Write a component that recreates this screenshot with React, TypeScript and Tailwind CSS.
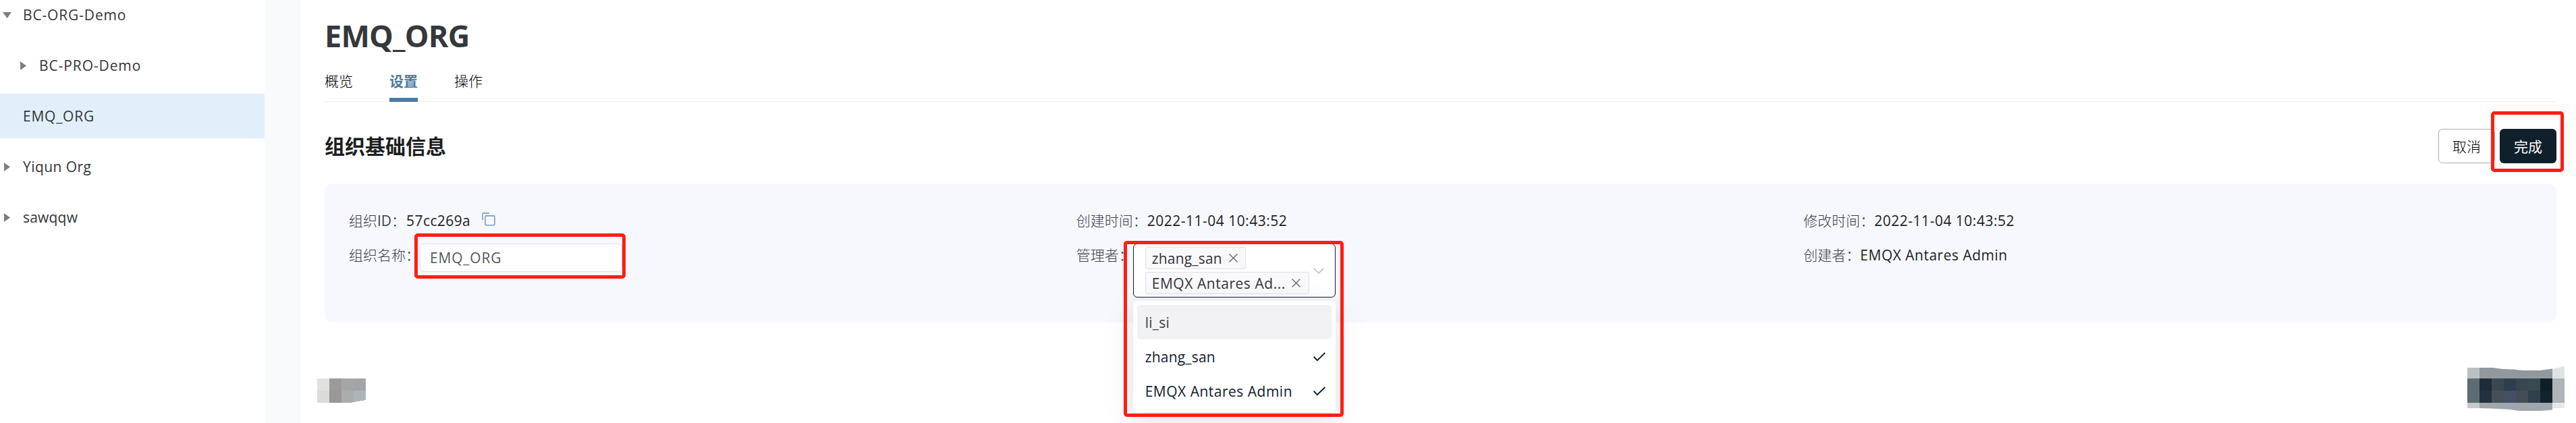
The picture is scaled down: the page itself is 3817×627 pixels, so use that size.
import React from 'react';

function CaretDown() {
  return (
    <svg width="13" height="9" viewBox="0 0 13 9" className="block shrink-0">
      <path d="M0 0H13L6.5 9Z" fill="#7b8085" />
    </svg>
  );
}

function CaretRight() {
  return (
    <svg width="9" height="13" viewBox="0 0 9 13" className="block shrink-0">
      <path d="M0 0V13L9 6.5Z" fill="#7b8085" />
    </svg>
  );
}

function CopyIcon() {
  return (
    <svg width="20" height="20" viewBox="0 0 20 20" fill="none" stroke="#7a9fc0" strokeWidth="1.6" className="block">
      <path d="M1 11V2Q1 0.9 2.1 0.9H11" />
      <rect x="5" y="4.9" width="13.9" height="13.9" rx="1.2" />
    </svg>
  );
}

function CloseIcon() {
  return (
    <svg width="13" height="13" viewBox="0 0 13 13" fill="none" stroke="#606266" strokeWidth="1.3" className="block shrink-0">
      <path d="M0.5 0.5L12.5 12.5M12.5 0.5L0.5 12.5" />
    </svg>
  );
}

function CheckIcon() {
  return (
    <svg width="18" height="14" viewBox="0 0 18 14" fill="none" stroke="#0f212d" strokeWidth="2" className="block shrink-0">
      <path d="M0.6 6.8L5.8 12.2L17.4 0.9" />
    </svg>
  );
}

function Highlight({ className }: { className: string }) {
  return (
    <div className={'pointer-events-none absolute z-20 rounded-[5px] border-[5px] border-[#ff1e12] ' + className} />
  );
}

function TreeItem({
  label,
  caret,
  tracking,
  nested,
  active,
}: {
  label: string;
  caret?: React.ReactNode;
  tracking: string;
  nested?: boolean;
  active?: boolean;
}) {
  return (
    <div className={'flex h-[66px] items-center rounded-r-[3px] ' + (nested ? 'pl-6 ' : '') + (active ? 'bg-[#e1effa]' : '')}>
      <div className="flex w-[21px] justify-center">{caret}</div>
      <div className={'ml-[13px] ' + tracking}>{label}</div>
    </div>
  );
}

function Label({ children }: { children: React.ReactNode }) {
  return <span className="shrink-0 font-light text-[#3d3f47]">{children}</span>;
}

function Tag({ label, className, tracking }: { label: string; className: string; tracking: string }) {
  return (
    <div className={'flex h-[33px] items-center justify-between rounded-[3px] border border-[#dfe1e6] bg-[#f9f9fb] pl-[9px] text-[#333538] ' + className}>
      <span className={'leading-[30px] ' + tracking}>{label}</span>
      <CloseIcon />
    </div>
  );
}

function Option({ label, selected, tracking }: { label: string; selected?: boolean; tracking: string }) {
  return (
    <div
      className={
        'flex h-[51px] items-center justify-between rounded-[5px] pr-[9px] pl-3 ' +
        (selected ? 'text-[#0f212d]' : 'bg-[#f2f2f4] text-[#3d3f45]')
      }
    >
      <span className={tracking}>{label}</span>
      {selected && <CheckIcon />}
    </div>
  );
}

function AdminSelect() {
  return (
    <div className="relative">
      <div className="flex h-20 w-[300px] items-center rounded-[6px] border border-[#0f212d] bg-white pl-[17px]">
        <div className="flex w-[243px] flex-col gap-1">
          <Tag label="zhang_san" className="w-[149px] pr-[11px]" tracking="tracking-[0.2px]" />
          <Tag label="EMQX Antares Ad..." className="w-[243px] pr-3" tracking="tracking-[0.55px]" />
        </div>
        <svg width="16" height="9" viewBox="0 0 16 9" fill="none" stroke="#bfc2c8" strokeWidth="1.6" className="ml-1.5 block">
          <path d="M0.7 0.8L8 7.8L15.3 0.8" />
        </svg>
      </div>
      <div className="absolute top-[85px] left-0 z-10 w-[300px] rounded-[5px] bg-white p-1.5 shadow-[0_14px_48px_8px_rgba(0,0,0,0.05),0_6px_24px_rgba(0,0,0,0.08)]">
        <Option label="li_si" tracking="tracking-[0.25px]" />
        <Option label="zhang_san" selected tracking="tracking-[0.2px]" />
        <Option label="EMQX Antares Admin" selected tracking="tracking-[0.5px]" />
      </div>
      <Highlight className="-top-1 -left-[14px] h-[261px] w-[326px]" />
    </div>
  );
}

function SmallMosaic() {
  return (
    <svg width="72" height="36" viewBox="0 0 72 36" shapeRendering="crispEdges" className="-ml-[11px] mt-4 block">
      <path d="M0 0H18V18H0Z" fill="#e1e1e0" />
      <path d="M18 0H36V18H18Z" fill="#9b9a98" />
      <path d="M36 0H54V18H36Z" fill="#a5a6a8" />
      <path d="M54 0H72V18H54Z" fill="#a3a4a7" />
      <path d="M0 18H18V36H0Z" fill="#dbdbda" />
      <path d="M18 18H36V36H18Z" fill="#999896" />
      <path d="M36 18H54V35L50 36H36Z" fill="#abadac" />
      <path d="M54 18H72V32L54 35Z" fill="#afb4b8" />
    </svg>
  );
}

const mosaic = [
  ['#1e2c38', '#384a4f', '#303d4c', '#38464f', '#38494f', '#0c1f2a'],
  ['#22313e', '#464f57', '#444f62', '#444c55', '#2f3f4e', '#12232c'],
];

function LargeMosaic() {
  return (
    <svg width="144" height="66" viewBox="0 0 144 66" className="-mt-[2px] -mr-3 block">
      <path d="M0 2H18V18H0Z" fill="#bac0c3" />
      <path d="M18 2H38L52 4L68 4.5L82 6H108L126 3.5V18H18Z" fill="#92999e" />
      <path d="M126 3.5L136 2L141 0H144V18H126Z" fill="#dfe3e4" />
      <path d="M0 18H18V54H0Z" fill="#5d6b72" />
      {mosaic.map((row, y) =>
        row.map((fill, x) => (
          <rect key={x + '-' + y} x={18 + x * 18} y={18 + y * 18} width="18" height="18" fill={fill} shapeRendering="crispEdges" />
        )),
      )}
      <path d="M126 18H144V54H126Z" fill="#aeb4b8" />
      <path d="M0 54H18V62H0Z" fill="#c6cacd" />
      <path d="M18 54H126V64.5L110 66H76L64 64L36 62.5L18 62Z" fill="#9fa6ac" />
      <path d="M126 54H144V62H126Z" fill="#e5e7e9" />
    </svg>
  );
}

export default function App() {
  return (
    <div className="flex h-[627px] overflow-hidden bg-white font-['Open_Sans','Noto_Sans_CJK_SC',sans-serif] text-[21px] leading-[30px] text-[#1d1e1f]">
      <aside className="-mt-[11px] flex w-[392px] shrink-0 flex-col gap-[9px] text-[#333538]">
        <TreeItem label="BC-ORG-Demo" caret={<CaretDown />} tracking="tracking-[0.85px]" />
        <TreeItem label="BC-PRO-Demo" caret={<CaretRight />} tracking="tracking-[0.9px]" nested />
        <TreeItem label="EMQ_ORG" tracking="tracking-[0.75px]" active />
        <TreeItem label="Yiqun Org" caret={<CaretRight />} tracking="tracking-[0.45px]" />
        <TreeItem label="sawqqw" caret={<CaretRight />} tracking="tracking-[0.2px]" />
      </aside>
      <div className="w-[53px] shrink-0 bg-[#f9fafc]" />
      <main className="flex min-w-0 flex-1 flex-col pr-[29px] pl-9">
        <h1 className="h-[89px] pt-[22px] text-[45px] leading-[61px] font-bold tracking-[-0.8px] text-[#35383c]">EMQ_ORG</h1>
        <nav className="flex h-[62px] items-stretch gap-[54px] border-b border-[#ebecf3] font-light text-black">
          <div className="flex items-center">概览</div>
          <div className="-mb-px flex items-center border-b-[6px] border-[#4a7ca3] pt-[5px] font-bold text-[#4a7ca3]">设置</div>
          <div className="flex items-center">操作</div>
        </nav>
        <div className="flex h-[121px] items-start justify-between pt-10">
          <h2 className="text-[30px] leading-[51px] font-bold">组织基础信息</h2>
          <div className="relative flex gap-[7px] font-light">
            <button className="h-[51px] w-[84px] rounded-[6px] border border-[#aeafb1] bg-white text-black">取消</button>
            <button className="h-[51px] w-[84px] rounded-[6px] bg-[#0f202b] font-normal text-white">完成</button>
            <Highlight className="-top-[26px] -right-[11px] h-[90px] w-[108px]" />
          </div>
        </div>
        <section className="grid h-[206px] grid-cols-3 content-start rounded-xl bg-[#f6f8fe] pt-9 pr-[38px] pl-9">
          <div className="flex h-[38px] items-center">
            <Label>
              组织<span className="font-normal">ID</span>：
            </Label>
            <span className="ml-px tracking-[0.4px]">57cc269a</span>
            <div className="-mt-[5px] ml-[17px]">
              <CopyIcon />
            </div>
          </div>
          <div className="flex h-[38px] items-center">
            <Label>创建时间：</Label>
            <span className="tracking-[0.5px]">2022-11-04 10:43:52</span>
          </div>
          <div className="flex h-[38px] items-center">
            <Label>修改时间：</Label>
            <span className="tracking-[0.5px]">2022-11-04 10:43:52</span>
          </div>
          <div className="flex items-start pt-[15px]">
            <div className="-mt-1 leading-[42px]">
              <Label>组织名称：</Label>
            </div>
            <div className="relative flex h-[42px] w-[300px] items-center rounded-[6px] border border-[#dfe1e9] bg-white pl-[14px] tracking-[0.8px] text-[#55575d]">
              EMQ_ORG
              <Highlight className="-top-4 -left-[9px] h-[67px] w-[313px]" />
            </div>
          </div>
          <div className="flex items-start pt-[15px]">
            <div className="-mt-1 leading-[42px]">
              <Label>管理者：</Label>
            </div>
            <AdminSelect />
          </div>
          <div className="flex items-start pt-[11px] leading-[42px]">
            <Label>创建者：</Label>
            <span className="tracking-[0.5px]">EMQX Antares Admin</span>
          </div>
        </section>
        <footer className="flex items-start justify-between pt-[67px]">
          <SmallMosaic />
          <LargeMosaic />
        </footer>
      </main>
    </div>
  );
}
